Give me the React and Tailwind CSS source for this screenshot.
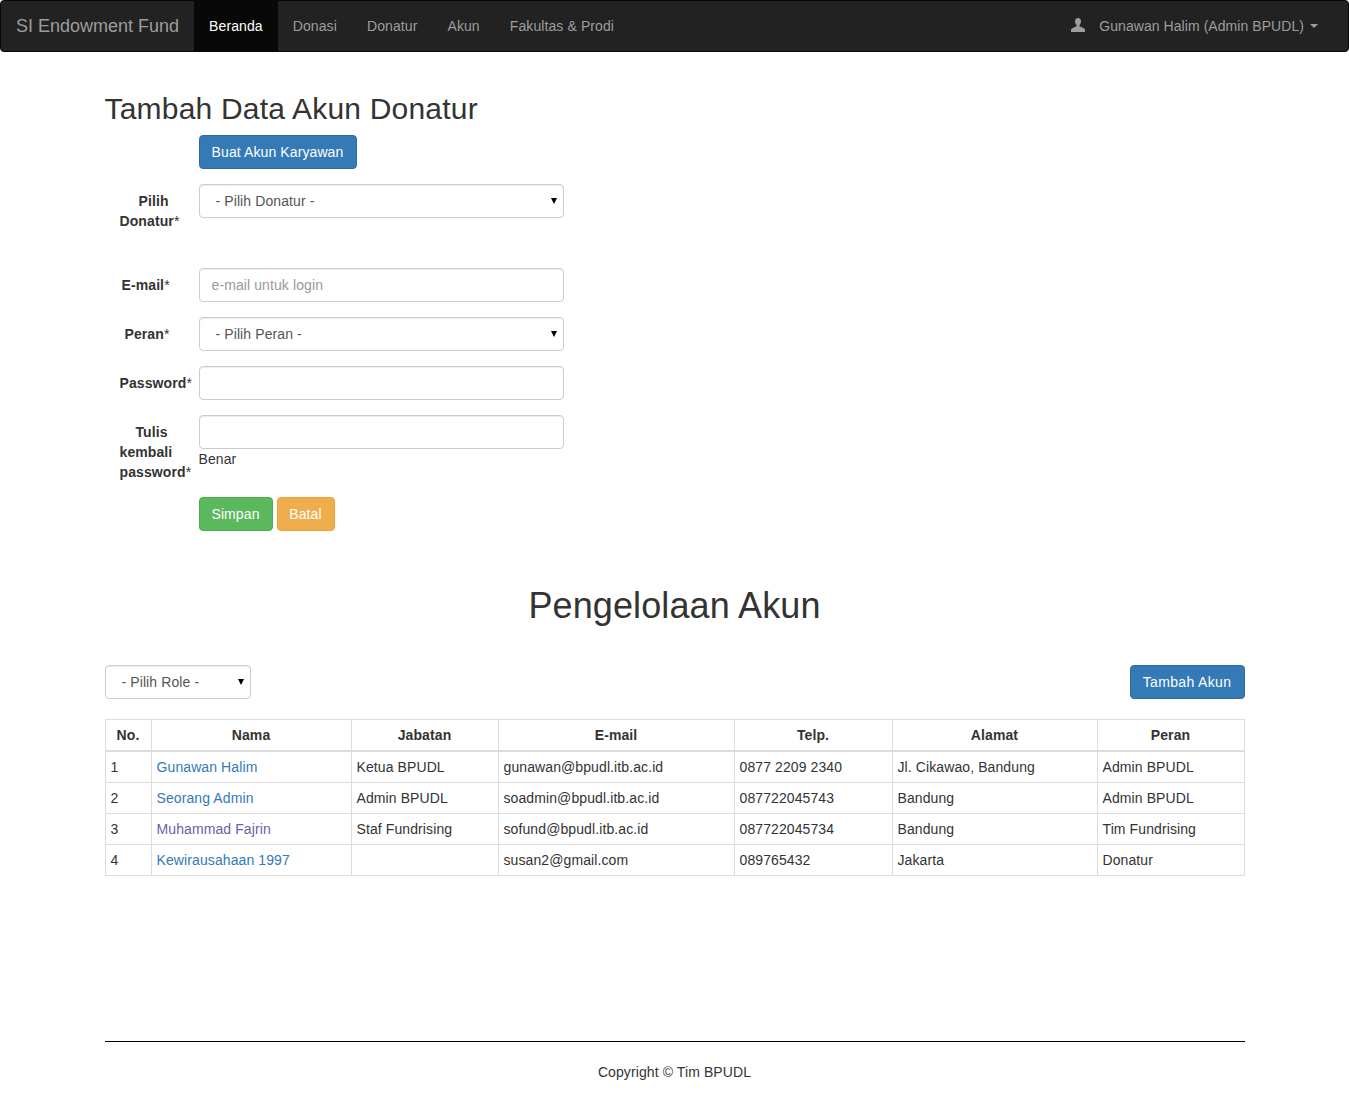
import React from 'react'

const btn = "inline-block h-[34px] border rounded-[4px] text-[14px] leading-[20px] text-white text-center"
const field = "block w-[365px] h-[34px] px-[12px] bg-white border border-[#ccc] rounded-[4px] text-[14px] text-[#555] shadow-[inset_0_1px_1px_rgba(0,0,0,0.075)] placeholder:text-[#999]"
const selectField = "block w-full h-[34px] pl-[16px] pr-[12px] bg-white border border-[#ccc] rounded-[4px] text-[14px] text-[#555] shadow-[inset_0_1px_1px_rgba(0,0,0,0.075)] appearance-none"

const navItems = ['Donasi', 'Donatur', 'Akun', 'Fakultas & Prodi']

const rows = [
    ['1', 'Gunawan Halim', 'Ketua BPUDL', 'gunawan@bpudl.itb.ac.id', '0877 2209 2340', 'Jl. Cikawao, Bandung', 'Admin BPUDL'],
    ['2', 'Seorang Admin', 'Admin BPUDL', 'soadmin@bpudl.itb.ac.id', '087722045743', 'Bandung', 'Admin BPUDL'],
    ['3', 'Muhammad Fajrin', 'Staf Fundrising', 'sofund@bpudl.itb.ac.id', '087722045734', 'Bandung', 'Tim Fundrising'],
    ['4', 'Kewirausahaan 1997', '', 'susan2@gmail.com', '089765432', 'Jakarta', 'Donatur'],
]

const headers = ['No.', 'Nama', 'Jabatan', 'E-mail', 'Telp.', 'Alamat', 'Peran']

const UserIcon = () => (
    <svg width="14" height="14" viewBox="0 0 14 14" className="block mb-[2px]">
        <path fill="#9d9d9d" d="M7 0C5 0 4 1.4 4 3.2c0 1.5.6 3 1.5 3.9v1.2L1.2 10.2C.4 10.6 0 11.2 0 12v2h14v-2c0-.8-.4-1.4-1.2-1.8L8.5 8.3V7.1C9.4 6.2 10 4.7 10 3.2 10 1.4 9 0 7 0z" />
    </svg>
)

const Navbar = () => (
    <nav className="h-[52px] bg-[#222] border border-[#080808] rounded-[4px] flex items-stretch justify-between">
        <div className="flex items-stretch">
            <a className="px-[15px] text-[18px] leading-[50px] tracking-normal text-[#9d9d9d]">SI Endowment Fund</a>
            <a className="px-[15px] text-[14px] leading-[50px] text-white bg-[#080808]">Beranda</a>
            {navItems.map((item) => (
                <a key={item} className="px-[15px] text-[14px] leading-[50px] text-[#9d9d9d]">{item}</a>
            ))}
        </div>
        <div className="flex items-center pr-[30px] text-[14px] text-[#9d9d9d]">
            <UserIcon />
            <span className="ml-[14px] tracking-[0.06px]">Gunawan Halim (Admin BPUDL)</span>
            <span className="ml-[6px] w-0 h-0 border-x-[4px] border-x-transparent border-t-[4px] border-t-[#9d9d9d]"></span>
        </div>
    </nav>
)

// label lines sit at uneven offsets in the original form
const FormLabel = ({ lines }) => (
    <div className="w-[94px] shrink-0 pt-[7px] text-[14px] leading-[20px] font-bold text-[#333]">
        {lines.map(([text, left]) => (
            <div key={text} className={left}>
                {text.replace('*', '')}
                {text.endsWith('*') && <span className="font-normal">*</span>}
            </div>
        ))}
    </div>
)

const Select = ({ label, className }) => (
    <div className={`relative ${className}`}>
        <select className={selectField} defaultValue="">
            <option value="">{label}</option>
        </select>
        <span className="absolute top-[14px] right-[7px] w-0 h-0 border-x-[3px] border-x-transparent border-t-[6px] border-t-black"></span>
    </div>
)

const DonaturForm = () => (
    <form>
        <div className="flex mb-[15px]">
            <div className="w-[94px] shrink-0"></div>
            <button type="button" className={`${btn} w-[158px] bg-[#337ab7] border-[#2e6da4]`}>Buat Akun Karyawan</button>
        </div>
        <div className="flex items-start mb-[37px]">
            <FormLabel lines={[['Pilih', 'pl-[34px]'], ['Donatur*', 'pl-[15px]']]} />
            <Select label="- Pilih Donatur -" className="w-[365px]" />
        </div>
        <div className="flex items-start mb-[15px]">
            <FormLabel lines={[['E-mail*', 'pl-[17px]']]} />
            <input className={field} placeholder="e-mail untuk login" />
        </div>
        <div className="flex items-start mb-[15px]">
            <FormLabel lines={[['Peran*', 'pl-[20px]']]} />
            <Select label="- Pilih Peran -" className="w-[365px]" />
        </div>
        <div className="flex items-start mb-[15px]">
            <FormLabel lines={[['Password*', 'pl-[15px]']]} />
            <input type="password" className={field} />
        </div>
        <div className="flex items-start mb-[15px]">
            <FormLabel lines={[['Tulis', 'pl-[31px]'], ['kembali', 'pl-[15px]'], ['password*', 'pl-[15px]']]} />
            <div>
                <input type="password" className={field} />
                <div className="text-[14px] leading-[20px] text-[#333]">Benar</div>
            </div>
        </div>
        <div className="flex gap-[4px] pl-[94px]">
            <button type="button" className={`${btn} w-[74px] bg-[#5cb85c] border-[#4cae4c]`}>Simpan</button>
            <button type="button" className={`${btn} w-[58px] bg-[#f0ad4e] border-[#eea236]`}>Batal</button>
        </div>
    </form>
)

const AkunTable = () => (
    <table className="w-[1139px] table-fixed border-collapse text-[14px] leading-[20px] text-[#333]">
        <colgroup>
            <col className="w-[46px]" />
            <col className="w-[200px]" />
            <col className="w-[147px]" />
            <col className="w-[236px]" />
            <col className="w-[158px]" />
            <col className="w-[205px]" />
            <col className="w-[147px]" />
        </colgroup>
        <thead>
            <tr>
                {headers.map((h) => (
                    <th key={h} className="p-[5px] border border-[#ddd] border-b-2 font-bold text-center">{h}</th>
                ))}
            </tr>
        </thead>
        <tbody>
            {rows.map((row) => (
                <tr key={row[0]}>
                    {row.map((cell, i) => (
                        <td key={i} className="py-[5px] pl-[5px] pr-[5px] border border-[#ddd]">
                            {i === 1 ? (
                                <a className={row[0] === '3' ? 'text-[#6a5fa8]' : 'text-[#337ab7]'}>{cell}</a>
                            ) : cell}
                        </td>
                    ))}
                </tr>
            ))}
        </tbody>
    </table>
)

export default function App() {
    return (
        <div className="min-h-[1112px] bg-white font-['Liberation_Sans',Arial,sans-serif] tracking-[0.1px] text-[#333]">
            <Navbar />
            <div className="w-[1140px] mx-auto pb-[30px]">
                <h2 className="mt-[40px] mb-[10px] text-[30px] leading-[33px] tracking-[0.2px] font-medium">Tambah Data Akun Donatur</h2>
                <DonaturForm />

                <h1 className="mt-[55px] mb-[39px] text-[36px] leading-[40px] tracking-[0.12px] font-medium text-center">Pengelolaan Akun</h1>

                <div className="flex items-start justify-between mb-[20px]">
                    <Select label="- Pilih Role -" className="w-[146px]" />
                    <button type="button" className={`${btn} w-[115px] tracking-[0.35px] bg-[#337ab7] border-[#2e6da4]`}>Tambah Akun</button>
                </div>

                <AkunTable />

                <hr className="mt-[165px] mb-[20px] border-0 border-t border-black" />
                <p className="text-center text-[14px] leading-[20px]">Copyright © Tim BPUDL</p>
            </div>
        </div>
    )
}
